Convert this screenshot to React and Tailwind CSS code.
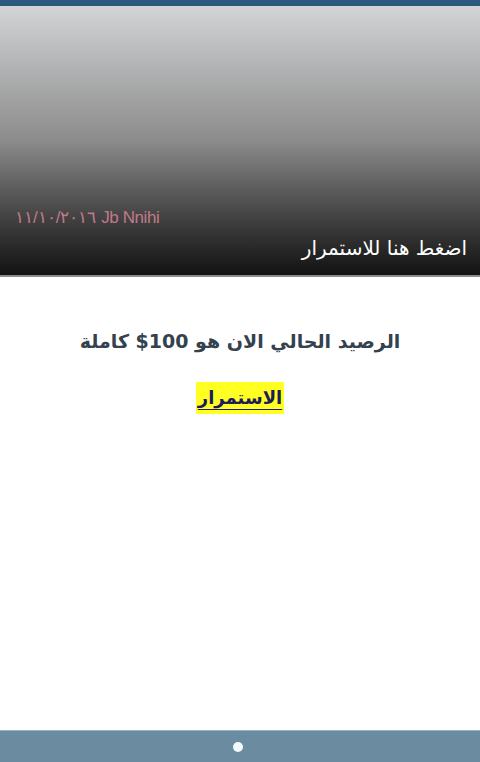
export default function App() {
  return (
    <div className="w-[480px] h-[762px] flex flex-col bg-white overflow-hidden" style={{ fontFamily: '"DejaVu Sans", "Noto Sans", sans-serif' }}>
      <div className="h-[6px] bg-[#2c5a7a] shrink-0" />
      <div className="h-[269px] shrink-0 flex flex-col justify-end bg-gradient-to-b from-[#d2d4d6] via-[#8c8c8c] to-[#131313] px-[13px] pb-[13px]">
        <div className="text-[17px] leading-[20px] text-[#c07a88] mb-[6px] pl-[2px] tracking-[-0.4px]" style={{ fontFamily: '"Liberation Sans", sans-serif' }}>
          ١١/١٠/٢٠١٦ Jb Nnihi
        </div>
        <div dir="rtl" className="text-[20px] leading-[28px] text-white">اضغط هنا للاستمرار</div>
      </div>
      <div className="h-[2px] bg-[#8c8c8c] shrink-0" />
      <div className="flex-1 flex flex-col items-center pt-[50px]" dir="rtl">
        <div className="text-[19px] leading-[28px] font-bold text-[#34414e]">الرصيد الحالي الان هو 100$ كاملة</div>
        <div className="mt-[27px] bg-[#ffff22] px-[2px] text-[18px] leading-[32px] font-bold text-[#1c1c5a] underline underline-offset-[5px]">الاستمرار</div>
      </div>
      <div className="h-[32px] shrink-0 bg-[#6b8ca0] border-t border-[#9ab4c2] flex items-center justify-center">
        <div className="w-[10px] h-[10px] rounded-full bg-[#f4f8ff] -ml-[4px]" />
      </div>
    </div>
  );
}
